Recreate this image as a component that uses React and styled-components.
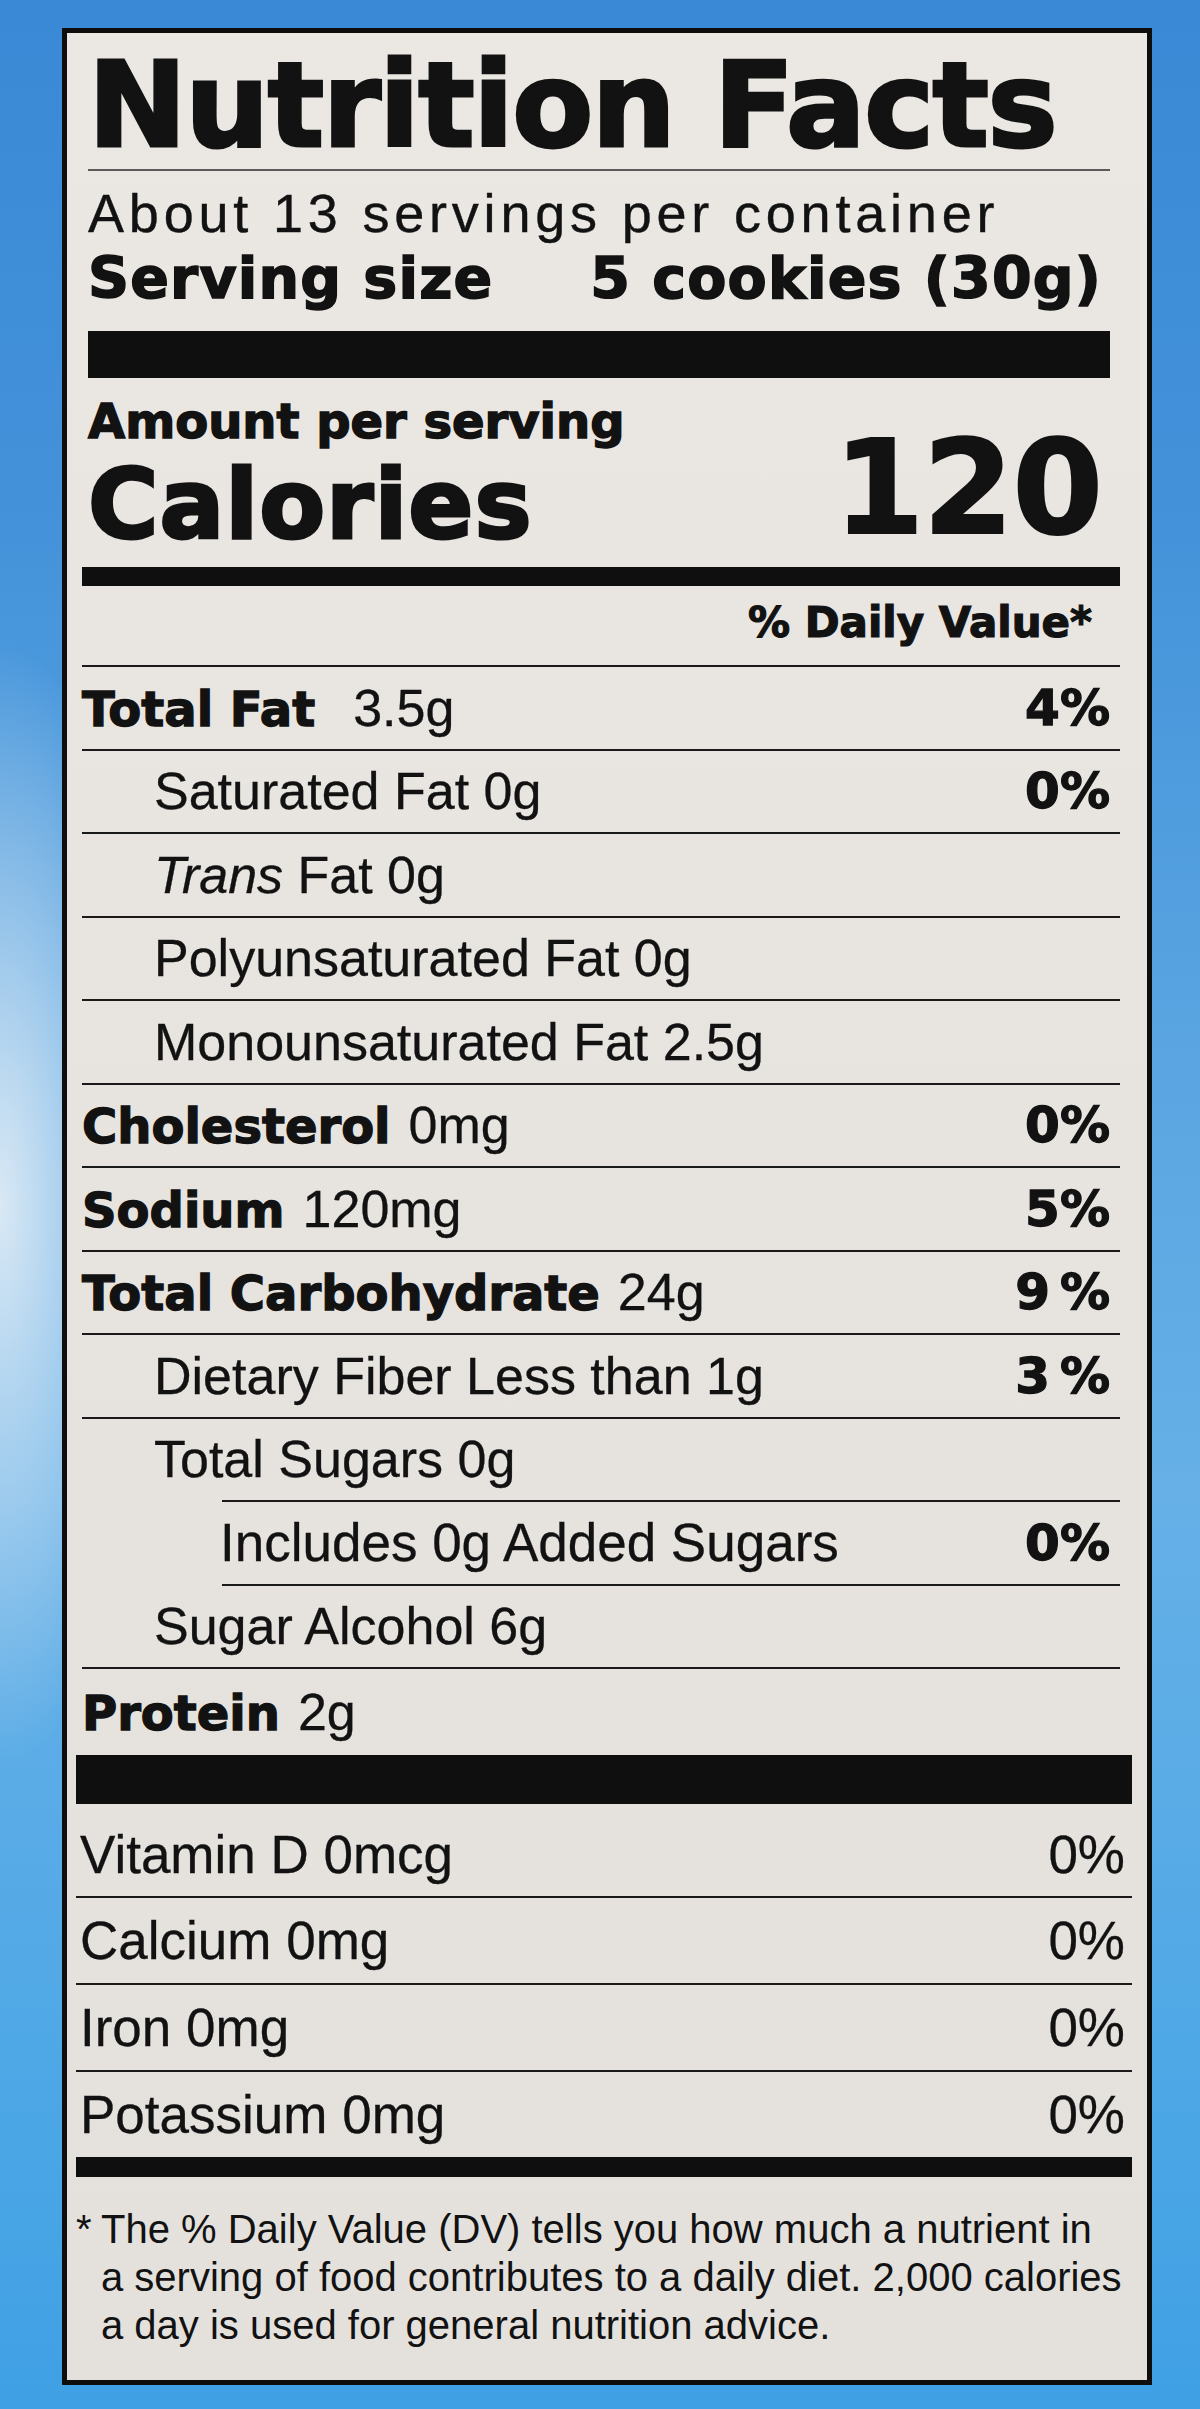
import React from 'react'
import styled, { createGlobalStyle } from 'styled-components'

const GlobalStyle = createGlobalStyle`
  html, body {
    margin: 0;
    padding: 0;
  }
  body {
    font-family: "Liberation Sans", Arial, sans-serif;
    color: #121212;
  }
`

const Page = styled.div`
  min-height: 2409px;
  box-sizing: border-box;
  padding: 28px 0 0 62px;
  background:
    radial-gradient(ellipse 230px 780px at 0% 50%, rgba(228, 238, 246, 0.92), rgba(228, 238, 246, 0) 72%),
    linear-gradient(180deg, #3a89d6 0%, #4291d9 20%, #5ba6e2 45%, #66b0e7 62%, #4fa8e6 85%, #3fa0e4 100%);
`

const Label = styled.section`
  width: 1090px;
  box-sizing: border-box;
  border: 5px solid #0e0e0e;
  background: linear-gradient(180deg, #ebe8e4 0%, #e7e4e0 50%, #e4e1dd 100%);
  padding: 13px 27px 31px 15px;
  color: #121212;
`

// the photo is a little skewed, so each band sits slightly differently
const Band = styled.div`
  display: flex;
  flex-direction: column;
  margin: 0 ${p => p.$right || 0}px 0 ${p => p.$left || 0}px;
`

const Title = styled.h1`
  margin: 0;
  font-family: "DejaVu Sans", "Liberation Sans", sans-serif;
  font-weight: 700;
  font-size: 118px;
  line-height: 1;
  letter-spacing: -1.5px;
  white-space: nowrap;
  -webkit-text-stroke: 3px #121212;
`

const HairLine = styled.div`
  height: 2px;
  margin-top: 5px;
  background: #5a5a5a;
`

const Servings = styled.div`
  margin-top: 15px;
  font-size: 54px;
  line-height: 1;
  letter-spacing: 4.8px;
  white-space: nowrap;
  -webkit-text-stroke: 0.4px #121212;
`

const ServingSize = styled.div`
  display: flex;
  justify-content: space-between;
  margin-top: 10px;
  padding-right: 8px;
  font-family: "DejaVu Sans", sans-serif;
  font-weight: 700;
  font-size: 57px;
  line-height: 1;
  letter-spacing: 1.2px;
  white-space: nowrap;
  -webkit-text-stroke: 1.6px #121212;
`

const Bar = styled.div`
  height: ${p => p.$h}px;
  margin-top: ${p => p.$mt || 0}px;
  background: #0f0f0f;
`

const CaloriesRow = styled.div`
  display: flex;
  justify-content: space-between;
  align-items: flex-end;
  margin-top: 19px;
  padding-right: 8px;
`

const CaloriesLeft = styled.div`
  display: flex;
  flex-direction: column;
  gap: 12px;
`

const Heavy = styled.div`
  font-family: "DejaVu Sans", sans-serif;
  font-weight: 700;
  font-size: ${p => p.$size}px;
  line-height: 1;
  letter-spacing: ${p => p.$ls || 0}px;
  white-space: nowrap;
  -webkit-text-stroke: ${p => p.$stroke || 0}px #121212;
`

const DVHeader = styled.div`
  margin-top: 16px;
  padding-right: 28px;
  text-align: right;
  font-family: "DejaVu Sans", sans-serif;
  font-weight: 700;
  font-size: 42px;
  line-height: 1;
  -webkit-text-stroke: 1.2px #121212;
`

const Rule = styled.div`
  height: 2px;
  margin-top: ${p => p.$mt || 0}px;
  margin-left: ${p => p.$inset || 0}px;
  background: #1a1a1a;
`

const Row = styled.div`
  display: flex;
  align-items: center;
  justify-content: space-between;
  box-sizing: border-box;
  height: ${p => p.$h || 81.5}px;
  padding: ${p => p.$top || 0}px ${p => p.$right ?? 10}px 0 ${p => p.$indent || 0}px;
  white-space: nowrap;
`

const Name = styled.span`
  font-family: "DejaVu Sans", sans-serif;
  font-weight: 700;
  font-size: 48px;
  line-height: 1;
  -webkit-text-stroke: 1.3px #121212;
`

const Value = styled.span`
  margin-left: ${p => p.$gap ?? 18}px;
  font-size: ${p => p.$size || 52}px;
  line-height: 1;
  -webkit-text-stroke: 0.3px #121212;
`

const Pct = styled.span`
  font-family: ${p => (p.$plain ? '"Liberation Sans", Arial' : '"DejaVu Sans"')}, sans-serif;
  font-weight: ${p => (p.$plain ? 400 : 700)};
  font-size: ${p => (p.$plain ? 53 : 50)}px;
  line-height: 1;
  -webkit-text-stroke: ${p => (p.$plain ? 0.3 : 1.3)}px #121212;
`

const Footnote = styled.div`
  display: flex;
  margin-top: 28px;
  font-size: 40px;
  line-height: 48px;
`

const Star = styled.span`
  width: 25px;
  flex: none;
`

const FootLine = styled.span`
  display: block;
  white-space: nowrap;
`

const nutrients = [
  { name: 'Total Fat', value: '3.5g', pct: '4%', gap: 38 },
  { value: 'Saturated Fat 0g', pct: '0%', indent: 72 },
  { value: 'Fat 0g', italic: 'Trans', indent: 72 },
  { value: 'Polyunsaturated Fat 0g', indent: 72 },
  { value: 'Monounsaturated Fat 2.5g', indent: 72 },
  { name: 'Cholesterol', value: '0mg', pct: '0%' },
  { name: 'Sodium', value: '120mg', pct: '5%' },
  { name: 'Total Carbohydrate', value: '24g', pct: '9\u2009%' },
  { value: 'Dietary Fiber Less than 1g', pct: '3\u2009%', indent: 72 },
  { value: 'Total Sugars 0g', indent: 72, ruleInset: 140 },
  { value: 'Includes 0g Added Sugars', pct: '0%', indent: 138, ruleInset: 140, size: 53 },
  { value: 'Sugar Alcohol 6g', indent: 72 },
]

const vitamins = [
  { name: 'Vitamin D 0mcg', pct: '0%' },
  { name: 'Calcium 0mg', pct: '0%' },
  { name: 'Iron 0mg', pct: '0%' },
  { name: 'Potassium 0mg', pct: '0%' },
]

export default function App() {
  return (
    <Page>
      <GlobalStyle />
      <Label>
        <Band $left={6} $right={10}>
          <Title>Nutrition Facts</Title>
          <HairLine />
          <Servings>About 13 servings per container</Servings>
          <ServingSize>
            <span>Serving size</span>
            <span>5 cookies (30g)</span>
          </ServingSize>
          <Bar $h={47} $mt={24} />
          <CaloriesRow>
            <CaloriesLeft>
              <Heavy $size={48} $stroke={1.5}>Amount per serving</Heavy>
              <Heavy $size={96} $ls={1} $stroke={3}>Calories</Heavy>
            </CaloriesLeft>
            <Heavy $size={130} $ls={-1} $stroke={2}>120</Heavy>
          </CaloriesRow>
        </Band>

        <Band>
          <Bar $h={19} $mt={14} />
          <DVHeader>% Daily Value*</DVHeader>
          <Rule $mt={21} />
          {nutrients.map((n, i) => (
            <React.Fragment key={i}>
              <Row $indent={n.indent}>
                <span>
                  {n.name && <Name>{n.name}</Name>}
                  <Value $gap={n.name ? n.gap : 0} $size={n.size}>
                    {n.italic && <i>{n.italic} </i>}
                    {n.value}
                  </Value>
                </span>
                {n.pct && <Pct>{n.pct}</Pct>}
              </Row>
              <Rule $inset={n.ruleInset} />
            </React.Fragment>
          ))}
          <Row $h={86}>
            <span>
              <Name>Protein</Name>
              <Value>2g</Value>
            </span>
          </Row>
        </Band>

        <Band $left={-6} $right={-12}>
          <Bar $h={49} />
          {vitamins.map((v, i) => (
            <React.Fragment key={v.name}>
              {i > 0 && <Rule />}
              <Row $h={i === 0 ? 92 : 85} $top={i === 0 ? 8 : 0} $indent={4} $right={7}>
                <Value $gap={0} $size={53}>{v.name}</Value>
                <Pct $plain>{v.pct}</Pct>
              </Row>
            </React.Fragment>
          ))}
          <Bar $h={20} />
          <Footnote>
            <Star>*</Star>
            <div>
              <FootLine>The % Daily Value (DV) tells you how much a nutrient in</FootLine>
              <FootLine>a serving of food contributes to a daily diet. 2,000 calories</FootLine>
              <FootLine>a day is used for general nutrition advice.</FootLine>
            </div>
          </Footnote>
        </Band>
      </Label>
    </Page>
  )
}
